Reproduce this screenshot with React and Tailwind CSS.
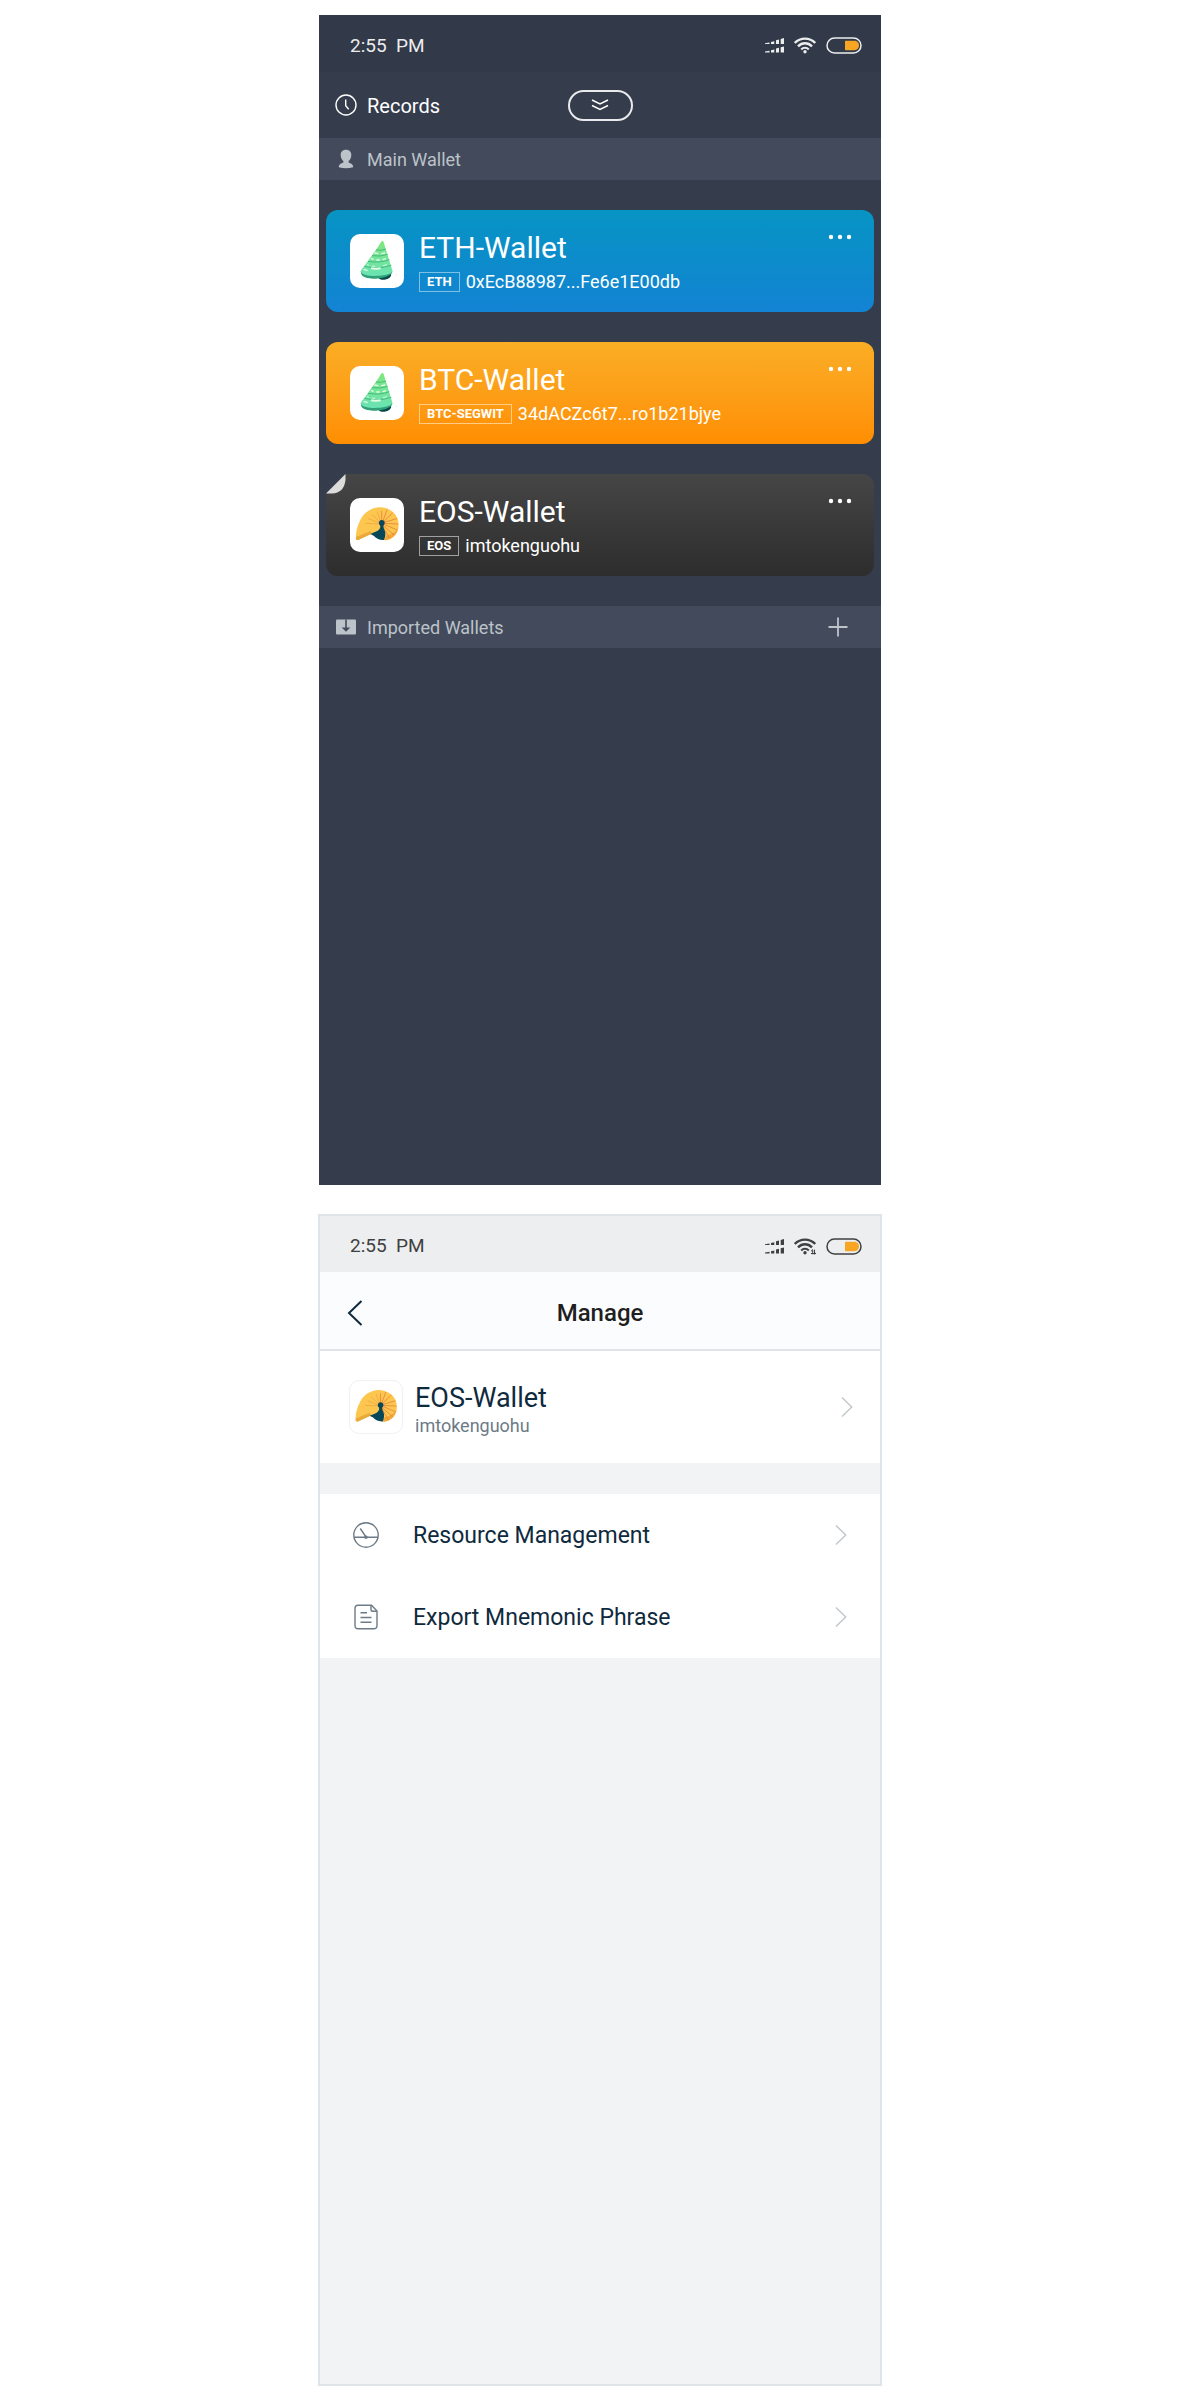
import React from "react";
import clsx from "clsx";

const wallets = [
  {
    name: "ETH-Wallet",
    tag: "ETH",
    address: "0xEcB88987...Fe6e1E00db",
    avatar: "cone",
    bg: "bg-linear-to-b from-[#0794c3] to-[#1383d3]",
    tagBorder: "border-[#7cc0e6]",
  },
  {
    name: "BTC-Wallet",
    tag: "BTC-SEGWIT",
    address: "34dACZc6t7...ro1b21bjye",
    avatar: "cone",
    bg: "bg-linear-to-b from-[#faae25] to-[#ff8e01]",
    tagBorder: "border-[#ffce84]",
  },
  {
    name: "EOS-Wallet",
    tag: "EOS",
    address: "imtokenguohu",
    avatar: "shell",
    bg: "bg-linear-to-b from-[#464646] to-[#2d2d2d]",
    tagBorder: "border-[#a0a0a0]",
    active: true,
  },
];

// AVATARS

const ConeAvatar = () => (
  <svg viewBox="0 0 162 162" className="h-full w-full" aria-hidden="true">
    <defs>
      <linearGradient id="cone" x1="0" y1="0" x2="0" y2="1">
        <stop offset="0" stopColor="#7fe77c" />
        <stop offset="1" stopColor="#6ae3b4" />
      </linearGradient>
    </defs>
    <ellipse cx="104" cy="125" rx="20" ry="12" fill="#07484a" transform="rotate(-12 104 125)" />
    <path d="M33 112C31 125 42 133 68 134C94 134 126 126 127 113L125 105L36 108Z" fill="#31a077" />
    <path
      d="M96 21C93 23 90 29 86 36L43 96C38 102 33 107 33 113C38 128 80 127 100 124C118 121 128 116 127 109L101 25C100 21 98 20 96 21Z"
      fill="url(#cone)"
    />
    <g fill="none" stroke="#3fae7c" strokeWidth="2.5">
      <path d="M78 48Q94 51 108 45" />
      <path d="M66 65Q92 69 113 61" />
      <path d="M54 82Q90 88 118 77" />
      <path d="M43 97Q85 107 124 94" />
    </g>
    <g fill="none" stroke="#e4fbe6" strokeWidth="4">
      <path d="M73 57L85 59M94 59L106 57" />
      <path d="M63 74L71 76M79 78L89 78M98 77L108 74" />
      <path d="M51 92L57 94M66 96L76 97M99 95L111 92" strokeWidth="2.5" />
      <path d="M41 106L53 110" />
      <path d="M63 103Q78 105 92 103" strokeWidth="6" />
    </g>
    <circle cx="139" cy="121" r="1" fill="#8aa" />
  </svg>
);

const ShellAvatar = () => (
  <svg viewBox="0 0 162 162" className="h-full w-full" aria-hidden="true">
    <path
      d="M18 124C16 108 21 84 32 64C42 43 67 27 91 28C122 29 146 50 146 80C146 106 130 125 104 127L60 108L25 126Q19 127 18 124Z"
      fill="#fdc64f"
    />
    <path d="M18 117L62 99L64 108L25 126Q19 127 18 124Z" fill="#e9a93b" />
    <path d="M104 127C128 124 141 108 145 90C137 100 126 110 107 113Z" fill="#f3a73a" />
    <g stroke="#e2703a" strokeWidth="2" strokeLinecap="round">
      <path d="M95 74L95 40M97 74L111 36M98 74L127 45M99 74L140 62M99 76L143 78M99 78L140 95M99 82L131 110M99 86L118 119" />
    </g>
    <g stroke="#e9a03f" strokeWidth="2" strokeLinecap="round">
      <path d="M92 72L82 42M90 73L67 50M88 75L56 62M87 78L48 76" />
    </g>
    <path
      d="M95 66C101 66 105 70 104 76C103 80 100 82 100 86C101 94 107 99 106 108C106 115 104 122 102 126C88 127 78 121 72 114C68 111 64 109 61 108C72 103 83 101 88 94C92 89 91 86 90 82C85 79 85 67 95 66Z"
      fill="#06475a"
    />
  </svg>
);

const Avatar = ({ type, className }) => (
  <div className={clsx("shrink-0 overflow-hidden rounded-[10px] bg-white", className)}>
    {type === "cone" ? <ConeAvatar /> : <ShellAvatar />}
  </div>
);

// ICONS

const SignalIcon = () => (
  <svg width="19" height="15" viewBox="0 0 19 15" fill="currentColor" aria-hidden="true">
    <path d="M0 5.2L4.5 4.4V6.1H0ZM6 4L9.3 3.2V6.1H6ZM11 2.2L14 1.4V6.1H11ZM15.7 1L19 .1V6.1H15.7Z" />
    <path d="M0 13.5L4.5 12.7V14.4H0ZM6 12.3L9.3 11.5V14.4H6ZM11 10.5L14 9.7V14.4H11ZM15.7 9.3L19 8.4V14.4H15.7Z" />
  </svg>
);

const WifiIcon = ({ data }) => (
  <svg width="22" height="17" viewBox="0 0 22 17" fill="none" stroke="currentColor" strokeWidth="2.4" aria-hidden="true">
    <path d="M.8 6C6.5 .2 15.5 .2 21.2 6" />
    <path d="M4 9.3C8 5.3 14 5.3 18 9.3" />
    <path d="M7.2 12.5C9.3 10.3 12.7 10.3 14.8 12.5" strokeWidth="2" />
    <circle cx="11" cy="14.8" r="1.7" fill="currentColor" stroke="none" />
    {data && <path d="M18.7 11.7V16.3M17 13.3L18.7 11.7M20.5 11.7V16.3L22 14.7M17 15.5H22" strokeWidth="1" />}
  </svg>
);

const BatteryIcon = () => (
  <svg width="36" height="17" viewBox="0 0 36 17" fill="none" aria-hidden="true">
    <rect x="1" y="1" width="34" height="15" rx="7.5" stroke="currentColor" strokeWidth="1.5" />
    <path d="M19.7 3.8H28.5C31.2 3.8 33 6 33 8.5C33 11 31.2 13.2 28.5 13.2H19.7Q19 13.2 19 12.5V4.5Q19 3.8 19.7 3.8Z" fill="#f7a523" />
  </svg>
);

const ClockIcon = () => (
  <svg width="22" height="22" viewBox="0 0 22 22" fill="none" stroke="currentColor" strokeWidth="1.4" aria-hidden="true">
    <circle cx="11" cy="11" r="10" />
    <path d="M10.7 5.5V11.8L13.7 15.2" />
  </svg>
);

const UserIcon = () => (
  <svg width="22" height="20" viewBox="0 0 22 20" fill="currentColor" aria-hidden="true">
    <path d="M11 .8C14.5.8 16.4 3.1 16.3 6.2C16.2 9 14.9 11 13.6 12.1V13.6C15.8 14.4 18 15.2 18.2 18.2Q11 20.4 3.8 18.2C4 15.2 6.2 14.4 8.4 13.6V12.1C7.1 11 5.8 9 5.7 6.2C5.6 3.1 7.5.8 11 .8Z" />
  </svg>
);

const ImportIcon = () => (
  <svg width="22" height="16" viewBox="0 0 22 16" aria-hidden="true">
    <path d="M2 .4H20Q21 .4 21 1.4V14.6Q21 15.6 20 15.6H2Q1 15.6 1 14.6V1.4Q1 .4 2 .4Z" fill="currentColor" />
    <path d="M10.2 .4H11.8V8.4H15.3L11 12.8L6.7 8.4H10.2Z" fill="#434a5b" />
  </svg>
);

const DownIcon = () => (
  <svg width="18" height="12" viewBox="0 0 18 12" fill="none" stroke="currentColor" strokeWidth="1.4" aria-hidden="true">
    <path d="M1 1L9 5L17 1M1 6.5L9 10.5L17 6.5" />
  </svg>
);

const DotsIcon = () => (
  <svg width="24" height="6" viewBox="0 0 24 6" fill="currentColor" aria-hidden="true">
    <circle cx="3" cy="3" r="2.2" />
    <circle cx="12" cy="3" r="2.2" />
    <circle cx="21" cy="3" r="2.2" />
  </svg>
);

const PlusIcon = () => (
  <svg width="20" height="20" viewBox="0 0 20 20" fill="none" stroke="currentColor" strokeWidth="1.8" aria-hidden="true">
    <path d="M10 .5V19.5M.5 10H19.5" />
  </svg>
);

const BackIcon = () => (
  <svg width="16" height="26" viewBox="0 0 16 26" fill="none" stroke="currentColor" strokeWidth="2" aria-hidden="true">
    <path d="M14.5 1L2 13L14.5 25" />
  </svg>
);

const NextIcon = () => (
  <svg width="12" height="20" viewBox="0 0 12 20" fill="none" stroke="#c3c9ce" strokeWidth="1.5" aria-hidden="true">
    <path d="M1 .5L10.7 10L1 19.5" />
  </svg>
);

const GaugeIcon = () => (
  <svg width="26" height="26" viewBox="0 0 26 26" fill="none" stroke="currentColor" strokeWidth="1.4" aria-hidden="true">
    <circle cx="13" cy="13" r="12.2" />
    <path d="M1 15.2H25M7.3 6.5L13 15" />
    <circle cx="13" cy="15.2" r="1.8" fill="currentColor" stroke="none" />
  </svg>
);

const DocIcon = () => (
  <svg width="26" height="26" viewBox="0 0 26 26" fill="none" stroke="currentColor" strokeWidth="1.4" aria-hidden="true">
    <path d="M5 1.2H18.5L24 7V21.5Q24 24.8 20.7 24.8H5.3Q2 24.8 2 21.5V4.2Q2 1.2 5 1.2Z" />
    <path d="M18 1.5V5.5Q18 7.3 19.8 7.3H23.8" />
    <path d="M7.5 8.7H14M7.5 13.5H18.5M7.5 18.3H18.5" />
  </svg>
);

const StatusBar = ({ className, data }) => (
  <div className={clsx("flex items-center justify-between pt-1", className)}>
    <span className="text-[19px] leading-6 whitespace-pre">2:55  PM</span>
    <div className="flex items-center gap-[10px]">
      <SignalIcon />
      <WifiIcon data={data} />
      <BatteryIcon />
    </div>
  </div>
);

const SectionTitle = ({ icon, title, children }) => (
  <div className="flex h-[42px] items-center bg-[#434a5b] pr-[33px] pl-4 text-[#bcc3c9]">
    {icon}
    <h2 className="ml-[10px] flex-1 pt-[2px] text-lg leading-6">{title}</h2>
    {children}
  </div>
);

const WalletCard = ({ wallet }) => (
  <li className={clsx("relative flex h-[102px] items-start rounded-xl p-6 text-white", wallet.bg)}>
    {wallet.active && (
      <svg width="20" height="20" viewBox="0 0 20 20" className="absolute top-0 left-0" aria-hidden="true">
        <path d="M0 0H20L0 20Z" fill="#353c4b" />
        <path d="M19.5 0V6Q18 19 6 19.5H0Z" fill="#dcdcda" />
      </svg>
    )}
    <Avatar type={wallet.avatar} className="h-[54px] w-[54px]" />
    <div className="-mt-1 ml-[15px] flex-1">
      <h3 className="text-[30px] leading-9">{wallet.name}</h3>
      <div className="mt-1 flex items-center gap-[6px]">
        <span className={clsx("flex h-5 items-center border px-[7px] text-[13px] leading-4 font-bold", wallet.tagBorder)}>
          {wallet.tag}
        </span>
        <span className="text-lg leading-6">{wallet.address}</span>
      </div>
    </div>
    <button type="button" aria-label={`${wallet.name} menu`} className="-mr-[2px] cursor-pointer">
      <DotsIcon />
    </button>
  </li>
);

const WalletsScreen = () => (
  <section className="min-h-[1170px] w-full max-w-[562px] bg-[#353c4b]">
    <StatusBar className="h-[57px] bg-[#323949] pr-[19px] pl-[31px] text-[#eceded]" />
    {/* HEADER */}
    <header className="grid h-[66px] grid-cols-[1fr_auto_1fr] items-center px-4 text-white">
      <button type="button" className="flex cursor-pointer items-center gap-[10px] text-xl leading-6">
        <ClockIcon />
        <span className="pt-[2px]">Records</span>
      </button>
      <button
        type="button"
        aria-label="Close"
        className="flex h-[31px] w-[65px] cursor-pointer items-center justify-center rounded-full border-2 border-[#e9eaec]"
      >
        <DownIcon />
      </button>
    </header>
    <SectionTitle icon={<UserIcon />} title="Main Wallet" />
    {/* WALLETS */}
    <ul className="flex flex-col gap-[30px] px-[7px] py-[30px]">
      {wallets.map((wallet) => (
        <WalletCard key={wallet.name} wallet={wallet} />
      ))}
    </ul>
    <SectionTitle icon={<ImportIcon />} title="Imported Wallets">
      <button type="button" aria-label="Add wallet" className="cursor-pointer">
        <PlusIcon />
      </button>
    </SectionTitle>
  </section>
);

const MenuLink = ({ icon, label }) => (
  <a href="#" className="flex h-[82px] items-center px-[33px] text-[#6d7b87]">
    {icon}
    <span className="ml-[34px] flex-1 pt-[2px] text-[23px] leading-7 text-[#0f2a3d]">{label}</span>
    <NextIcon />
  </a>
);

const ManageScreen = () => (
  <section className="min-h-[1172px] w-full max-w-[564px] border-2 border-[#dfe4e8] bg-[#f1f3f5]">
    <StatusBar data className="h-14 bg-[#edeef0] pr-[18px] pl-[30px] text-[#404040]" />
    {/* HEADER */}
    <header className="grid h-[79px] grid-cols-[1fr_auto_1fr] items-center border-b-2 border-[#e0e3e6] bg-[#fbfcfe] px-[27px] pt-1">
      <button type="button" aria-label="Back" className="w-4 cursor-pointer text-[#0f2a3d]">
        <BackIcon />
      </button>
      <h1 className="text-2xl leading-8 font-medium text-[#1f1f1f]">Manage</h1>
    </header>
    {/* CURRENT WALLET */}
    <a href="#" className="flex h-28 items-center bg-white pr-[27px] pl-[29px]">
      <Avatar type="shell" className="h-[54px] w-[54px] border border-[#f0f1f3]" />
      <div className="ml-3 flex-1 pt-[6px]">
        <p className="text-[27px] leading-8 text-[#0f2a3d]">EOS-Wallet</p>
        <p className="text-lg leading-6 text-[#6d7b87]">imtokenguohu</p>
      </div>
      <NextIcon />
    </a>
    {/* OPTIONS */}
    <nav className="mt-[31px] bg-white">
      <MenuLink icon={<GaugeIcon />} label="Resource Management" />
      <MenuLink icon={<DocIcon />} label="Export Mnemonic Phrase" />
    </nav>
  </section>
);

const App = () => {
  return (
    <main className="flex min-h-screen flex-col items-center gap-[29px] bg-white pt-[15px] pb-[14px] font-['Roboto',sans-serif]">
      <WalletsScreen />
      <ManageScreen />
    </main>
  );
};

export default App;
